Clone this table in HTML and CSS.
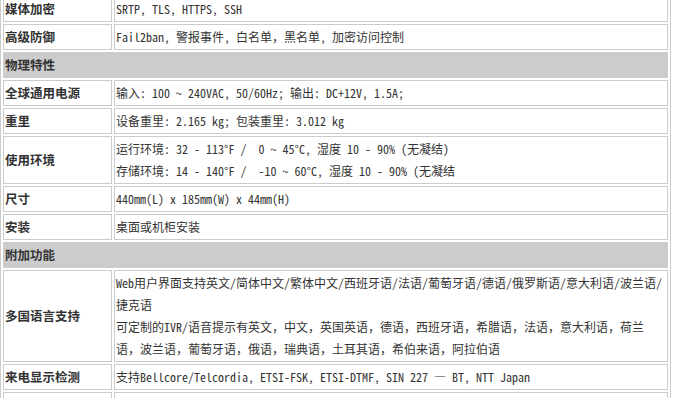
FILE: index.html
```html
<!DOCTYPE html>
<html lang="zh-CN">
<head>
<meta charset="utf-8">
<title>规格参数</title>
<link rel="stylesheet" href="styles.css">
</head>
<body>
<div class="sheet">
<table class="spec">
  <tr><td class="label">媒体加密</td><td class="value">SRTP, TLS, HTTPS, SSH</td></tr>
  <tr><td class="label">高级防御</td><td class="value">Fail2ban, 警报事件, 白名单，黑名单, 加密访问控制</td></tr>
  <tr><td class="section" colspan="2">物理特性</td></tr>
  <tr><td class="label">全球通用电源</td><td class="value">输入: 100 ~ 240VAC, 50/60Hz; 输出: DC+12V, 1.5A;</td></tr>
  <tr><td class="label">重里</td><td class="value">设备重里: 2.165 kg; 包装重里: 3.012 kg</td></tr>
  <tr><td class="label">使用环境</td><td class="value">运行环境: 32 - 113°F /&nbsp; 0 ~ 45°C, 湿度 10 - 90% (无凝结)<br>存储环境: 14 - 140°F /&nbsp; -10 ~ 60°C, 湿度 10 - 90% (无凝结</td></tr>
  <tr><td class="label">尺寸</td><td class="value">440mm(L) x 185mm(W) x 44mm(H)</td></tr>
  <tr><td class="label">安装</td><td class="value">桌面或机柜安装</td></tr>
  <tr><td class="section" colspan="2">附加功能</td></tr>
  <tr><td class="label">多国语言支持</td><td class="value">Web用户界面支持英文/简体中文/繁体中文/西班牙语/法语/葡萄牙语/德语/俄罗斯语/意大利语/波兰语/<br>捷克语<br>可定制的IVR/语音提示有英文，中文，英国英语，德语，西班牙语，希腊语，法语，意大利语，荷兰<br>语，波兰语，葡萄牙语，俄语，瑞典语，土耳其语，希伯来语，阿拉伯语</td></tr>
  <tr><td class="label">来电显示检测</td><td class="value">支持Bellcore/Telcordia, ETSI-FSK, ETSI-DTMF, SIN 227 — BT, NTT Japan</td></tr>
  <tr><td class="label">&nbsp;</td><td class="value">&nbsp;</td></tr>
</table>
</div>
</body>
</html>
```

FILE: styles.css
```css
html, body {
  margin: 0;
  padding: 0;
  background: #fff;
  overflow: hidden;
  height: 398px;
}

.sheet {
  margin-top: -7px;
}

.spec {
  width: 671px;
  border: 1px solid #cccccc;
  border-collapse: separate;
  border-spacing: 2px;
  background: #fff;
}

.spec td {
  border: 1px solid #cccccc;
  padding: 1px 1px;
  line-height: 22px;
  vertical-align: middle;
  text-align: left;
}

.label {
  width: 105px;
  font-family: "Noto Sans CJK SC", sans-serif;
  font-weight: bold;
  font-size: 12.5px;
  color: #333;
}

.value {
  font-family: "Noto Sans Mono CJK SC", "Noto Sans CJK SC", "Liberation Mono", monospace;
  font-size: 12px;
  color: #333;
  white-space: nowrap;
}

.section {
  background: #cccccc;
  font-family: "Noto Sans CJK SC", sans-serif;
  font-weight: bold;
  font-size: 12.5px;
  color: #333;
}
```
